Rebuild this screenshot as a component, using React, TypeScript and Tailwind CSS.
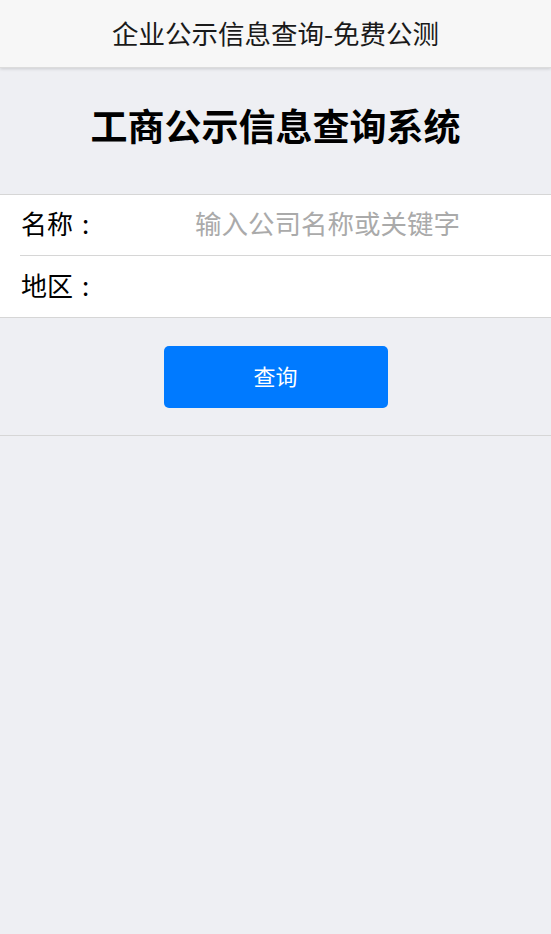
import React from "react";

export default function App() {
  const font = { fontFamily: '"Noto Sans CJK SC", "Noto Sans", sans-serif' };
  return (
    <div className="min-h-[934px] w-full bg-[#eeeff3]" style={font}>
      <div className="flex h-[68px] items-center justify-center bg-[#f7f7f7] shadow-[0_1px_3px_rgba(0,0,0,0.15)] border-b border-[#dcdcdc]">
        <span className="text-[26.5px] leading-none text-[#1a1a1a] pb-[1px]">企业公示信息查询-免费公测</span>
      </div>
      <div className="flex h-[126px] items-center justify-center pb-[12px]">
        <h1 className="text-[37px] font-bold leading-none text-black">工商公示信息查询系统</h1>
      </div>
      <div className="border-y border-[#d6d6d6] bg-white">
        <div className="ml-[20px] flex h-[61px] items-center border-b border-[#d6d6d6] pb-[5px]">
          <span className="w-[175px] pl-[1px] text-[26px] leading-none text-black">
            名称<span className="ml-[9px]">:</span>
          </span>
          <input
            className="min-w-0 flex-1 bg-transparent text-[26.5px] leading-none text-black outline-none placeholder:text-[#aaaaaa]"
            style={font}
            placeholder="输入公司名称或关键字"
          />
        </div>
        <div className="flex h-[61px] items-center pl-[21px] pb-[4px]">
          <span className="text-[26px] leading-none text-black">
            地区<span className="ml-[9px]">:</span>
          </span>
        </div>
      </div>
      <div className="flex justify-center pt-[28px] pb-[27px] border-b border-[#d6d6d6]">
        <button className="h-[62px] w-[224px] rounded-[5px] bg-[#007aff] pb-[4px] text-[22px] leading-none text-white">查询</button>
      </div>
    </div>
  );
}
